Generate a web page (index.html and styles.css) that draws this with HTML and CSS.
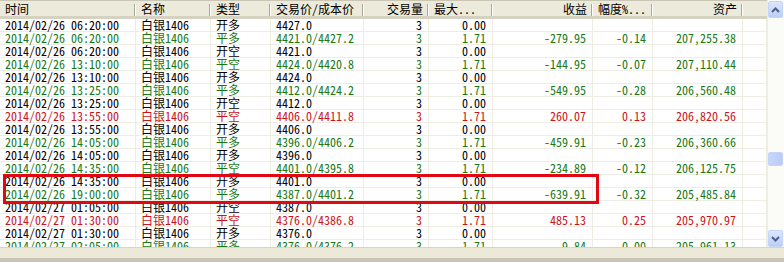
FILE: index.html
```html
<!DOCTYPE html>
<html lang="zh">
<head>
<meta charset="utf-8">
<title>交易记录</title>
<link rel="stylesheet" href="styles.css">
</head>
<body>
<div class="window">
  <div class="listview">
    <div class="grid">
      <table class="trades">
        <colgroup>
          <col class="c-time"><col class="c-name"><col class="c-type"><col class="c-price"><col class="c-qty"><col class="c-max"><col class="c-pnl"><col class="c-pct"><col class="c-asset"><col class="c-fill">
        </colgroup>
        <thead>
          <tr>
            <th>时间</th><th>名称</th><th>类型</th><th>交易价/成本价</th><th class="num">交易量</th><th>最大...</th><th class="num">收益</th><th>幅度%...</th><th class="num">资产</th><th class="fill"></th>
          </tr>
        </thead>
        <tbody>
          <tr><td>2014/02/26 06:20:00</td><td>白银1406</td><td>开多</td><td>4427.0</td><td class="num">3</td><td class="num">0.00</td><td></td><td></td><td></td><td></td></tr>
          <tr class="g"><td>2014/02/26 06:20:00</td><td>白银1406</td><td>平多</td><td>4421.0/4427.2</td><td class="num">3</td><td class="num">1.71</td><td class="num">-279.95</td><td class="num">-0.14</td><td class="num">207,255.38</td><td></td></tr>
          <tr><td>2014/02/26 06:20:00</td><td>白银1406</td><td>开空</td><td>4421.0</td><td class="num">3</td><td class="num">0.00</td><td></td><td></td><td></td><td></td></tr>
          <tr class="g"><td>2014/02/26 13:10:00</td><td>白银1406</td><td>平空</td><td>4424.0/4420.8</td><td class="num">3</td><td class="num">1.71</td><td class="num">-144.95</td><td class="num">-0.07</td><td class="num">207,110.44</td><td></td></tr>
          <tr><td>2014/02/26 13:10:00</td><td>白银1406</td><td>开多</td><td>4424.0</td><td class="num">3</td><td class="num">0.00</td><td></td><td></td><td></td><td></td></tr>
          <tr class="g"><td>2014/02/26 13:25:00</td><td>白银1406</td><td>平多</td><td>4412.0/4424.2</td><td class="num">3</td><td class="num">1.71</td><td class="num">-549.95</td><td class="num">-0.28</td><td class="num">206,560.48</td><td></td></tr>
          <tr><td>2014/02/26 13:25:00</td><td>白银1406</td><td>开空</td><td>4412.0</td><td class="num">3</td><td class="num">0.00</td><td></td><td></td><td></td><td></td></tr>
          <tr class="r"><td>2014/02/26 13:55:00</td><td>白银1406</td><td>平空</td><td>4406.0/4411.8</td><td class="num">3</td><td class="num">1.71</td><td class="num">260.07</td><td class="num">0.13</td><td class="num">206,820.56</td><td></td></tr>
          <tr><td>2014/02/26 13:55:00</td><td>白银1406</td><td>开多</td><td>4406.0</td><td class="num">3</td><td class="num">0.00</td><td></td><td></td><td></td><td></td></tr>
          <tr class="g"><td>2014/02/26 14:05:00</td><td>白银1406</td><td>平多</td><td>4396.0/4406.2</td><td class="num">3</td><td class="num">1.71</td><td class="num">-459.91</td><td class="num">-0.23</td><td class="num">206,360.66</td><td></td></tr>
          <tr><td>2014/02/26 14:05:00</td><td>白银1406</td><td>开多</td><td>4396.0</td><td class="num">3</td><td class="num">0.00</td><td></td><td></td><td></td><td></td></tr>
          <tr class="g"><td>2014/02/26 14:35:00</td><td>白银1406</td><td>平空</td><td>4401.0/4395.8</td><td class="num">3</td><td class="num">1.71</td><td class="num">-234.89</td><td class="num">-0.12</td><td class="num">206,125.75</td><td></td></tr>
          <tr><td>2014/02/26 14:35:00</td><td>白银1406</td><td>开多</td><td>4401.0</td><td class="num">3</td><td class="num">0.00</td><td></td><td></td><td></td><td></td></tr>
          <tr class="g"><td>2014/02/26 19:00:00</td><td>白银1406</td><td>平多</td><td>4387.0/4401.2</td><td class="num">3</td><td class="num">1.71</td><td class="num">-639.91</td><td class="num">-0.32</td><td class="num">205,485.84</td><td></td></tr>
          <tr><td>2014/02/27 01:05:00</td><td>白银1406</td><td>开空</td><td>4387.0</td><td class="num">3</td><td class="num">0.00</td><td></td><td></td><td></td><td></td></tr>
          <tr class="r"><td>2014/02/27 01:30:00</td><td>白银1406</td><td>平空</td><td>4376.0/4386.8</td><td class="num">3</td><td class="num">1.71</td><td class="num">485.13</td><td class="num">0.25</td><td class="num">205,970.97</td><td></td></tr>
          <tr><td>2014/02/27 01:30:00</td><td>白银1406</td><td>开多</td><td>4376.0</td><td class="num">3</td><td class="num">0.00</td><td></td><td></td><td></td><td></td></tr>
          <tr class="g"><td>2014/02/27 02:05:00</td><td>白银1406</td><td>平多</td><td>4376.0/4376.2</td><td class="num">3</td><td class="num">1.71</td><td class="num">-9.84</td><td class="num">-0.00</td><td class="num">205,961.13</td><td></td></tr>
        </tbody>
      </table>
      <div class="highlight"></div>
    </div>
    <div class="vscroll">
      <div class="sbtn">
        <svg width="9" height="6" viewBox="0 0 9 6"><polyline points="1,5 4.5,1.5 8,5" fill="none" stroke="#4d6185" stroke-width="2"/></svg>
      </div>
      <div class="track track-top"></div>
      <div class="thumb"></div>
      <div class="track track-bottom"></div>
      <div class="sbtn">
        <svg width="9" height="6" viewBox="0 0 9 6"><polyline points="1,1 4.5,4.5 8,1" fill="none" stroke="#4d6185" stroke-width="2"/></svg>
      </div>
    </div>
  </div>
  <div class="statusband"></div>
</div>
</body>
</html>
```
FILE: styles.css
```css
html, body {
  margin: 0;
  padding: 0;
  background: #ece9d8;
}

.window {
  width: 784px;
  height: 262px;
  display: flex;
  flex-direction: column;
  overflow: hidden;
}

.listview {
  height: 247px;
  display: flex;
  background: #ffffff;
  border-bottom: 1px solid #d8d5c6;
}

.grid {
  position: relative;
  flex: 1;
  overflow: hidden;
}

.trades {
  table-layout: fixed;
  border-collapse: separate;
  border-spacing: 0;
  width: 767px;
  font-family: "Noto Sans Mono CJK SC", "Noto Sans CJK SC", "Liberation Mono", monospace;
  font-size: 12px;
  color: #000;
}

.c-time { width: 136px; }
.c-name { width: 75px; }
.c-type { width: 60px; }
.c-price { width: 93px; }
.c-qty { width: 65px; }
.c-max { width: 64px; }
.c-pnl { width: 100px; }
.c-pct { width: 60px; }
.c-asset { width: 90px; }
.c-fill { width: 24px; }

.trades th {
  height: 15px;
  padding: 0 6px 0 5px;
  font-weight: normal;
  text-align: left;
  line-height: 15px;
  white-space: nowrap;
  border-top: 1px solid #c9c6b6;
  border-bottom: 3px solid #d6d2c2;
  background:
    linear-gradient(#aca899, #aca899) no-repeat right 1px top 3px / 1px 12px,
    linear-gradient(#ffffff, #ffffff) no-repeat right 0 top 3px / 1px 12px,
    #ebeadb;
}

.trades th.fill {
  background: #ebeadb;
}

.trades td {
  height: 12px;
  padding: 0 6px 0 5px;
  line-height: 12px;
  white-space: nowrap;
  border-bottom: 1px solid #efede3;
  border-right: 1px solid #efede3;
}

.trades .num {
  text-align: right;
}

.trades tr.g td { color: #187818; }
.trades tr.r td { color: #c8141e; }

.highlight {
  position: absolute;
  left: 3px;
  top: 174px;
  width: 596px;
  height: 30px;
  box-sizing: border-box;
  border: 3px solid #e30613;
}

.vscroll {
  width: 17px;
  display: flex;
  flex-direction: column;
  background: #fbfbf8;
  border-left: 1px solid #eeede5;
  box-sizing: border-box;
}

.sbtn {
  height: 15px;
  margin: 1px 1px 0 0;
  border: 1px solid #c6d4f7;
  border-radius: 2px;
  background: linear-gradient(#dce6fe, #bccdf6);
  display: flex;
  align-items: center;
  justify-content: center;
}

.sbtn:last-child {
  margin: 0 1px 0 0;
}

.track-top {
  height: 134px;
}

.thumb {
  height: 12px;
  margin-right: 1px;
  border: 1px solid #c6d4f7;
  border-radius: 2px;
  background: linear-gradient(90deg, #c8d6fb, #b9cbf6);
}

.track-bottom {
  flex: 1;
}

.statusband {
  height: 10px;
  background: #ece9d8;
  border-bottom: 4px solid #c8c5b6;
}
```
